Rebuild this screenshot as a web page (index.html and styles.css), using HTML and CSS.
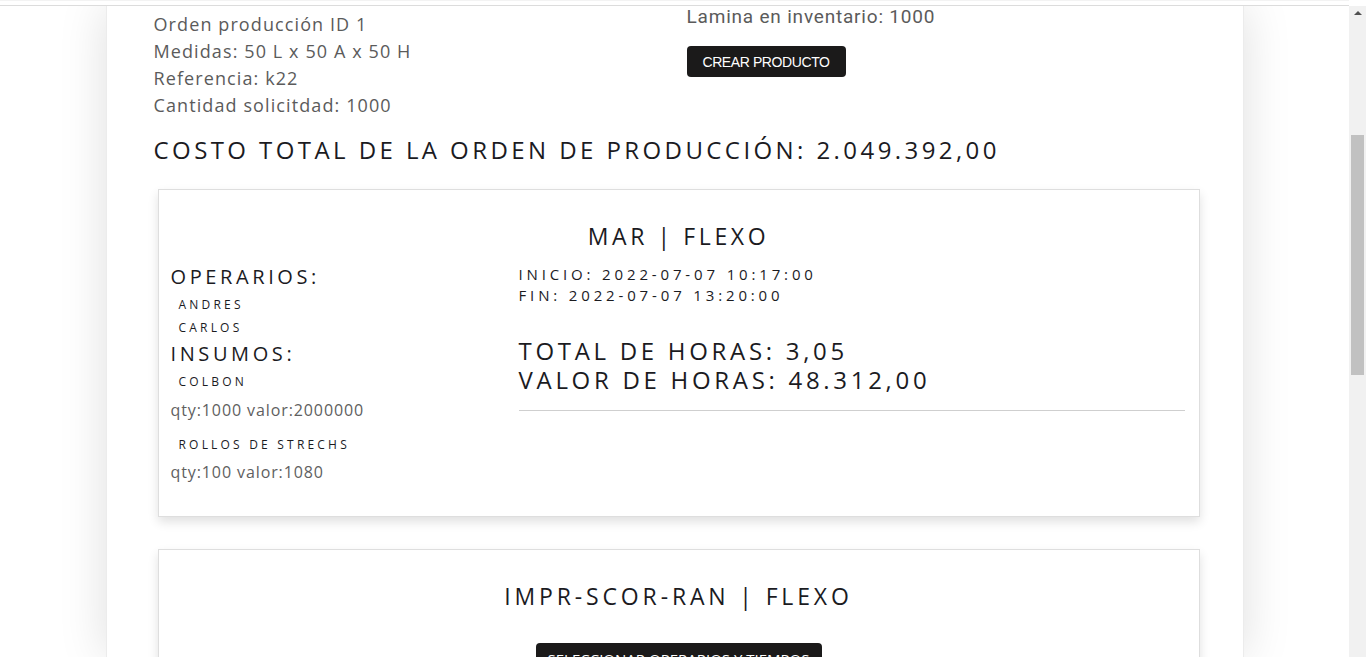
FILE: index.html
```html
<!DOCTYPE html>
<html lang="es">
<head>
<meta charset="utf-8">
<title>Orden de producción</title>
<link rel="stylesheet" href="styles.css">
</head>
<body>
<div class="topstrip"></div>
<div class="viewport">
  <main class="main">
    <div class="container">
      <div class="header-row">
        <div class="info">
          <p>Orden producción ID 1</p>
          <p>Medidas: 50 L x 50 A x 50 H</p>
          <p>Referencia: k22</p>
          <p>Cantidad solicitdad: 1000</p>
        </div>
        <div class="stock">
          <p class="lamina">Lamina en inventario: 1000</p>
          <button class="btn btn-sm">CREAR PRODUCTO</button>
        </div>
      </div>
      <h2 class="total">COSTO TOTAL DE LA ORDEN DE PRODUCCIÓN: 2.049.392,00</h2>

      <section class="card">
        <h3 class="card-title">MAR | FLEXO</h3>
        <div class="card-grid">
          <div class="col-left">
            <h4 class="sub">OPERARIOS:</h4>
            <div class="item item-first">ANDRES</div>
            <div class="item">CARLOS</div>
            <h4 class="sub sub-gap">INSUMOS:</h4>
            <div class="item item-first">COLBON</div>
            <p class="qty">qty:1000 valor:2000000</p>
            <div class="item item-gap">ROLLOS DE STRECHS</div>
            <p class="qty qty-tight">qty:100 valor:1080</p>
          </div>
          <div class="col-right">
            <p class="time">INICIO: 2022-07-07 10:17:00</p>
            <p class="time">FIN: 2022-07-07 13:20:00</p>
            <p class="hours hours-first">TOTAL DE HORAS: 3,05</p>
            <p class="hours">VALOR DE HORAS: 48.312,00</p>
            <hr class="rule">
          </div>
        </div>
      </section>

      <section class="card card-second">
        <h3 class="card-title card-title-wide">IMPR-SCOR-RAN | FLEXO</h3>
        <div class="center">
          <button class="btn btn-lg">SELECCIONAR OPERARIOS Y TIEMPOS</button>
        </div>
      </section>
    </div>
  </main>
  <div class="scrollbar">
    <div class="arrow"></div>
    <div class="thumb"></div>
  </div>
</div>
</body>
</html>
```
FILE: styles.css
```css
* { box-sizing: border-box; }
html, body { margin: 0; padding: 0; }
body {
  width: 1366px;
  height: 657px;
  overflow: hidden;
  background: #ffffff;
  font-family: "Open Sans", "Noto Sans", sans-serif;
}
p, h2, h3, h4 { margin: 0; font-weight: 400; }

.topstrip {
  height: 6px;
  border-top: 1px solid #f3f3f3;
  border-bottom: 1px solid #dcdcdc;
  margin-right: 17px;
}
.viewport {
  display: flex;
  height: 651px;
}
.main {
  flex: 1;
  overflow: hidden;
  display: flex;
  justify-content: center;
}
.container {
  width: 1138px;
  flex: none;
  background: #fff;
  box-shadow: 0 0 45px rgba(0,0,0,0.13);
  border-left: 1px solid #ececec;
  border-right: 1px solid #ececec;
  padding: 5px 36px 0 47px;
}

.header-row {
  display: grid;
  grid-template-columns: 533px 1fr;
}
.info p {
  font-size: 18px;
  line-height: 27px;
  color: #5b5b5b;
  letter-spacing: 1.1px;
}
.stock { margin-top: -8px; }
.lamina {
  font-family: "Roboto", sans-serif;
  font-size: 19px;
  line-height: 27px;
  color: #5b5b5b;
  letter-spacing: 0.8px;
}
.btn {
  background: #1b1a1a;
  color: #fff;
  border: 0;
  border-radius: 4px;
  font-family: "Liberation Sans", Arial, sans-serif;
  cursor: pointer;
}
.btn-sm {
  margin-top: 16px;
  height: 31px;
  width: 159px;
  font-size: 14px;
  letter-spacing: -0.4px;
  padding: 0;
}
.total {
  margin-top: 16px;
  font-size: 24px;
  line-height: 30px;
  letter-spacing: 3.42px;
  color: #1b1b1f;
}

.card {
  margin: 24px 7px 0 4px;
  border: 1px solid #dedede;
  box-shadow: 0 5px 10px rgba(0,0,0,0.12);
  padding: 32px 12px 32px 12px;
  background: #fff;
}
.card-second { margin-top: 32px; }
.card-title {
  text-align: center;
  font-size: 23px;
  line-height: 29px;
  letter-spacing: 3.6px;
  color: #1b1b1f;
}
.card-title-wide { letter-spacing: 3.85px; }
.card-grid {
  display: grid;
  grid-template-columns: 348px 1fr;
  margin-top: 14px;
}
.sub {
  font-size: 20px;
  line-height: 24px;
  letter-spacing: 3.6px;
  color: #1b1b1f;
}
.sub-gap { margin-top: 3px; }
.item {
  font-size: 12px;
  line-height: 23px;
  letter-spacing: 3.2px;
  color: #1b1b1f;
  padding-left: 8px;
}
.item-first { margin-top: 4px; }
.item-gap { margin-top: 11px; }
.qty {
  font-size: 16px;
  line-height: 24px;
  color: #606060;
  letter-spacing: 0.9px;
  margin-top: 5px;
}
.qty-tight { margin-top: 4px; }
.col-right { padding-right: 2px; margin-top: -1px; }
.time {
  font-size: 15px;
  line-height: 21px;
  letter-spacing: 3.85px;
  color: #1b1b1f;
}
.hours {
  font-size: 24px;
  line-height: 29px;
  letter-spacing: 3.7px;
  color: #1b1b1f;
}
.hours-first { margin-top: 30px; }
.rule {
  margin: 16px 0 0;
  border: 0;
  border-top: 1px solid #cfcfcf;
}
.center {
  display: flex;
  justify-content: center;
  margin-top: 32px;
}
.btn-lg {
  width: 286px;
  height: 32px;
  font-family: "Open Sans", sans-serif;
  font-size: 15px;
  padding: 0;
}

.scrollbar {
  width: 17px;
  background: #f1f1f1;
  display: flex;
  flex-direction: column;
  align-items: center;
}
.arrow {
  margin-top: 5px;
  width: 0;
  height: 0;
  border-left: 4px solid transparent;
  border-right: 4px solid transparent;
  border-bottom: 4px solid #505050;
}
.thumb {
  margin-top: 120px;
  width: 13px;
  height: 240px;
  background: #c1c1c1;
}
```
